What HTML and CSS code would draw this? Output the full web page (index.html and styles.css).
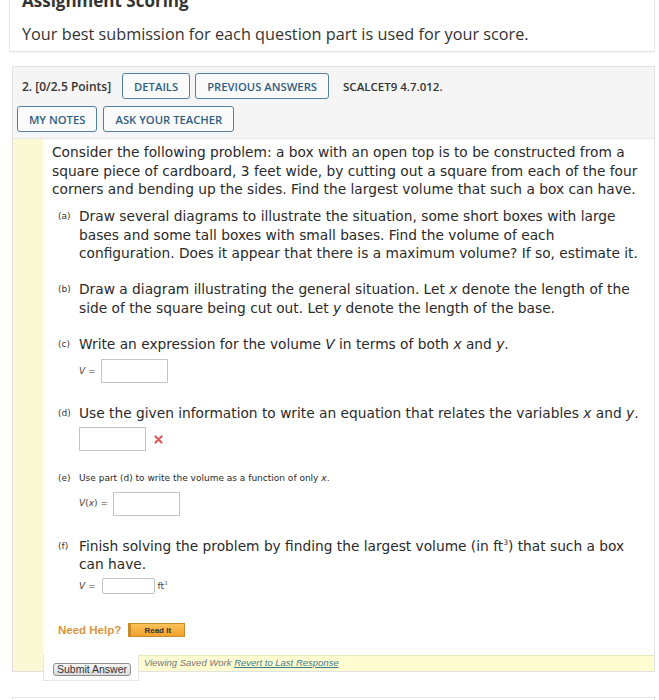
FILE: index.html
```html
<!DOCTYPE html>
<html lang="en">
<head>
<meta charset="utf-8">
<title>Assignment</title>
<link rel="stylesheet" href="styles.css">
</head>
<body>
<div class="page">
  <section class="card scoring">
    <h2 class="card-title">Assignment Scoring</h2>
    <p class="card-text">Your best submission for each question part is used for your score.</p>
  </section>

  <section class="question">
    <header class="q-head">
      <div class="q-row q-row-first">
        <span class="q-num">2. [0/2.5 Points]</span>
        <button class="q-btn">DETAILS</button>
        <button class="q-btn">PREVIOUS ANSWERS</button>
        <span class="q-code">SCALCET9 4.7.012.</span>
      </div>
      <div class="q-row">
        <button class="q-btn">MY NOTES</button>
        <button class="q-btn">ASK YOUR TEACHER</button>
      </div>
    </header>

    <div class="q-body">
      <div class="q-strip"></div>
      <div class="q-main">
        <div class="q-content">
          <p class="intro">Consider the following problem: a box with an open top is to be constructed from a square piece of cardboard, 3 feet wide, by cutting out a square from each of the four corners and bending up the sides. Find the largest volume that such a box can have.</p>

          <div class="part part-a">
            <span class="part-label">(a)</span>
            <div class="part-text">Draw several diagrams to illustrate the situation, some short boxes with large bases and some tall boxes with small bases. Find the volume of each configuration. Does it appear that there is a maximum volume? If so, estimate it.</div>
          </div>

          <div class="part part-b">
            <span class="part-label">(b)</span>
            <div class="part-text">Draw a diagram illustrating the general situation. Let <i>x</i> denote the length of the side of the square being cut out. Let <i>y</i> denote the length of the base.</div>
          </div>

          <div class="part part-c">
            <span class="part-label">(c)</span>
            <div class="part-text">Write an expression for the volume <i>V</i> in terms of both <i>x</i> and <i>y</i>.</div>
            <div class="answer answer-c">
              <span class="ans-label"><i>V</i> =</span>
              <span class="ans-box"></span>
            </div>
          </div>

          <div class="part part-d">
            <span class="part-label">(d)</span>
            <div class="part-text">Use the given information to write an equation that relates the variables <i>x</i> and <i>y</i>.</div>
            <div class="answer answer-d">
              <span class="ans-box"></span>
              <svg class="wrong" width="9" height="9" viewBox="0 0 9 9" aria-label="incorrect"><path d="M1.5 1.5 L7.5 7.5 M7.5 1.5 L1.5 7.5" stroke="#e0585a" stroke-width="2.2" stroke-linecap="round"/></svg>
            </div>
          </div>

          <div class="part part-e">
            <span class="part-label part-label-e">(e)</span>
            <div class="part-text part-text-e">Use part (d) to write the volume as a function of only <i>x</i>.</div>
            <div class="answer answer-e">
              <span class="ans-label"><i>V</i>(<i>x</i>) =</span>
              <span class="ans-box"></span>
            </div>
          </div>

          <div class="part part-f">
            <span class="part-label">(f)</span>
            <div class="part-text">Finish solving the problem by finding the largest volume (in ft<sup>3</sup>) that such a box can have.</div>
            <div class="answer answer-f">
              <span class="ans-label"><i>V</i> =</span>
              <span class="ans-box ans-box-small"></span>
              <span class="ans-unit">ft<sup>3</sup></span>
            </div>
          </div>

          <div class="help">
            <span class="help-label">Need Help?</span>
            <button class="read-it">Read It</button>
          </div>
        </div>

        <div class="q-foot">
          <div class="submit-box"><button class="submit-btn">Submit Answer</button></div>
          <div class="saved">Viewing Saved Work <a href="#" class="revert">Revert to Last Response</a></div>
        </div>
      </div>
    </div>
  </section>

  <section class="card next-card"></section>
</div>
</body>
</html>
```

FILE: styles.css
```css
* { box-sizing: border-box; }

body {
  margin: 0;
  background: #ffffff;
  font-family: "Open Sans", "DejaVu Sans", sans-serif;
  color: #333;
}

.page {
  padding: 0 4px 0 9px;
}

/* Top card */
.card {
  background: #fff;
  border: 1px solid #e6e6e6;
  box-shadow: 0 1px 1px rgba(0,0,0,0.04);
}

.scoring {
  margin-top: -21px;
  padding: 10px 12px 6px;
}

.card-title {
  margin: 0;
  font-size: 17px;
  line-height: 22px;
  font-weight: 700;
  color: #333;
}

.card-text {
  margin: 11px 0 0;
  font-size: 16.25px;
  line-height: 22px;
  color: #333;
}

/* Question panel */
.question {
  margin: 14px 0 0 3px;
  border: 1px solid #e2e2e2;
  background: #fff;
}

.q-head {
  background: #f5f5f5;
  padding: 6px 4px 6px;
  border-bottom: 1px solid #e8e8e8;
}

.q-row {
  display: flex;
  align-items: center;
  gap: 6px;
}

.q-row + .q-row { margin-top: 7px; }

.q-row-first {
  padding-left: 5px;
  gap: 5px;
}

.q-num {
  font-size: 12px;
  font-weight: 600;
  color: #333;
  margin-right: 6px;
}

.q-code {
  font-size: 11.5px;
  font-weight: 600;
  color: #333;
  margin-left: 9px;
}

.q-btn {
  height: 26px;
  padding: 0 11px;
  border: 1.5px solid #52809e;
  border-radius: 3px;
  background: #fafafa;
  color: #2f5f84;
  font-family: "Open Sans", sans-serif;
  font-size: 11.25px;
  font-weight: 600;
}

/* Body */
.q-body {
  display: grid;
  grid-template-columns: 30px 1fr;
}

.q-strip {
  background: #fbf9d4;
}

.q-main {
  display: flex;
  flex-direction: column;
}

.q-content {
  padding: 4px 9px 14px 9px;
  font-family: "DejaVu Sans", Verdana, sans-serif;
  font-size: 13.75px;
  line-height: 18.5px;
  color: #2a2a2a;
}

.intro { margin: 0; }

.part {
  display: grid;
  grid-template-columns: 21px 1fr;
  margin-left: 6px;
}

.part-label {
  font-size: 9px;
  line-height: 18.5px;
  color: #333;
}

.part-text { grid-column: 2; }

.part-a { margin-top: 8.5px; }
.part-b { margin-top: 17.5px; }
.part-c { margin-top: 18px; }
.part-d { margin-top: 20.5px; }
.part-e { margin-top: 20px; }
.part-f { margin-top: 21px; }

.part-label-e, .part-text-e {
  font-size: 9px;
  line-height: 14px;
}

sup {
  font-size: 0.55em;
  line-height: 0;
}

.answer {
  grid-column: 2;
  display: flex;
  align-items: center;
  gap: 5px;
  height: 24px;
}

.answer-c { margin-top: 5.5px; }
.answer-d { margin-top: 5px; gap: 8px; }
.answer-e { margin-top: 6.5px; }
.answer-f { margin-top: 4.5px; height: 16px; gap: 6px; }

.ans-label {
  font-size: 9px;
  color: #444;
}

.ans-box {
  width: 67px;
  height: 24px;
  border: 1px solid #c4c4c4;
  background: #fff;
}

.ans-box-small {
  width: 53px;
  height: 16px;
  border-radius: 2px;
}

.ans-unit {
  font-size: 9px;
  color: #444;
  margin-left: -3px;
}

.wrong { display: block; }

.help {
  display: flex;
  align-items: center;
  gap: 7px;
  margin: 27px 0 0 6px;
}

.help-label {
  font-family: "Liberation Sans", Arial, sans-serif;
  font-weight: 700;
  font-size: 11.5px;
  color: #d8953e;
}

.read-it {
  width: 57px;
  height: 14px;
  padding: 0;
  border: 1px solid #c98a2c;
  border-left: 3px solid #c98a2c;
  background: linear-gradient(#fcc259, #f1a12c);
  font-family: "Liberation Sans", Arial, sans-serif;
  font-size: 8px;
  font-weight: 700;
  color: #333;
}

/* Footer */
.q-foot {
  display: flex;
  align-items: flex-start;
}

.submit-box {
  width: 96px;
  height: 27px;
  margin-bottom: -11px;
  padding: 9px 0 0 9px;
  background: #fff;
  border: 1px solid #e6e6e6;
  border-top: none;
  position: relative;
}

.submit-btn {
  display: block;
  width: 78px;
  height: 13px;
  padding: 0;
  border: 1px solid #8f8f8f;
  border-radius: 3px;
  background: linear-gradient(#f6f6f6, #d9d9d9);
  font-family: "Liberation Sans", Arial, sans-serif;
  font-size: 10.5px;
  line-height: 11px;
  color: #333;
}

.saved {
  flex: 1;
  height: 16px;
  margin-top: 1px;
  padding-left: 5px;
  background: #fffcd2;
  border-top: 1px solid #ece8b8;
  font-family: "Liberation Sans", Arial, sans-serif;
  font-style: italic;
  font-size: 9.5px;
  line-height: 14px;
  color: #777;
}

.revert {
  color: #3b7c8d;
  text-decoration: underline;
}

/* next card */
.next-card {
  margin: 25px 0 0 3px;
  height: 40px;
}
```
